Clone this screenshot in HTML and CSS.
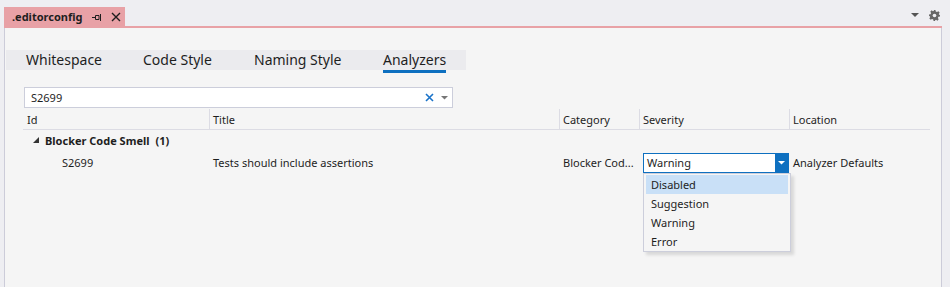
FILE: index.html
```html
<!DOCTYPE html>
<html lang="en">
<head>
    <meta charset="UTF-8">
    <title>.editorconfig</title>
    <link rel="stylesheet" href="styles.css">
</head>
<body>
    <div class="well">
        <div class="tab-strip">
            <div class="doc-tab">
                <span class="doc-name">.editorconfig</span>
                <svg class="pin" width="9" height="7" viewBox="0 0 9 7">
                    <path d="M0 3.5h3M3.5 1.5h3.5v4h-3.5zM8.5 0v7" fill="none" stroke="#1e1e1e" stroke-width="1"/>
                </svg>
                <svg class="close" width="10" height="10" viewBox="0 0 10 10">
                    <path d="M1 1l8 8M9 1l-8 8" stroke="#1e1e1e" stroke-width="1.4"/>
                </svg>
            </div>
            <div class="strip-tools">
                <svg width="8" height="5" viewBox="0 0 8 5"><path d="M0 0h8l-4 4z" fill="#555"/></svg>
                <svg width="11" height="11" viewBox="0 0 12 12">
                    <path d="M5 0h2l.4 1.7 1.3.6 1.5-.9 1.4 1.4-.9 1.5.6 1.3L12 5v2l-1.7.4-.6 1.3.9 1.5-1.4 1.4-1.5-.9-1.3.6L7 12H5l-.4-1.7-1.3-.6-1.5.9-1.4-1.4.9-1.5-.6-1.3L0 7V5l1.7-.4.6-1.3-.9-1.5 1.4-1.4 1.5.9 1.3-.6z" fill="#666"/>
                    <circle cx="6" cy="6" r="2" fill="#eeeef2"/>
                </svg>
            </div>
        </div>
        <div class="panel">
            <div class="page-tabs">
                <span class="page-tab tab-ws">Whitespace</span>
                <span class="page-tab tab-cs">Code Style</span>
                <span class="page-tab tab-ns">Naming Style</span>
                <span class="page-tab tab-an"><span class="active">Analyzers</span></span>
            </div>

            <div class="search">
                <span class="search-text">S2699</span>
                <svg class="search-clear" width="9" height="9" viewBox="0 0 9 9">
                    <path d="M1 1l7 7M8 1l-7 7" stroke="#1a73c9" stroke-width="1.6"/>
                </svg>
                <svg class="search-drop" width="7" height="4" viewBox="0 0 7 4"><path d="M0 0h7l-3.5 3.5z" fill="#777"/></svg>
            </div>

            <div class="grid">
                <div class="cell head first">Id</div>
                <div class="cell head">Title</div>
                <div class="cell head">Category</div>
                <div class="cell head">Severity</div>
                <div class="cell head">Location</div>

                <div class="group">
                    <svg width="7" height="7" viewBox="0 0 7 7"><path d="M6 0v6H0z" fill="#333"/></svg>
                    <span>Blocker Code Smell</span><span class="count">(1)</span>
                </div>

                <div class="cell row id">S2699</div>
                <div class="cell row">Tests should include assertions</div>
                <div class="cell row">Blocker Cod...</div>
                <div class="cell row combo-cell">
                    <div class="combo">
                        <span class="combo-value">Warning</span>
                        <span class="combo-btn">
                            <svg width="7" height="4" viewBox="0 0 7 4"><path d="M0 0h7l-3.5 3.5z" fill="#fff"/></svg>
                        </span>
                    </div>
                    <ul class="combo-list">
                        <li class="selected">Disabled</li>
                        <li>Suggestion</li>
                        <li>Warning</li>
                        <li>Error</li>
                    </ul>
                </div>
                <div class="cell row">Analyzer Defaults</div>
            </div>
        </div>
    </div>
</body>
</html>
```

FILE: styles.css
```css
body {
    margin: 0;
    background-color: #eeeef2;
    font-family: "Noto Sans", "Open Sans", sans-serif;
    font-size: 11px;
    color: #1e1e1e;
    height: 287px;
    overflow: hidden;
}
.well {
    margin-left: 4px;
    width: 938px;
}
.tab-strip {
    display: flex;
    align-items: flex-end;
    justify-content: space-between;
    height: 26px;
    border-bottom: 2px solid #e8a1a6;
}
.doc-tab {
    display: flex;
    align-items: center;
    height: 19px;
    padding: 0 4px 0 8px;
    background-color: #e8a1a6;
    font-weight: bold;
}
.pin {
    margin: 1px 0 0 10px;
}
.close {
    margin-left: 10px;
}
.strip-tools {
    display: flex;
    align-items: center;
    gap: 10px;
    margin-right: 2px;
    padding-bottom: 5px;
}
.panel {
    position: relative;
    box-sizing: border-box;
    background-color: #f5f5f5;
    border-left: 1px solid #ccccd9;
    border-right: 1px solid #ccccd9;
    height: 259px;
    padding: 22px 0 0 1px;
}
.page-tabs {
    display: flex;
    width: 460px;
    height: 20px;
    background-color: #ebebee;
    font-size: 14px;
    white-space: nowrap;
}
.page-tab {
    box-sizing: border-box;
    padding-left: 20px;
    line-height: 20px;
}
.tab-ws {
    width: 117px;
}
.tab-cs {
    width: 111px;
}
.tab-ns {
    width: 129px;
}
.page-tab .active {
    display: inline-block;
    height: 23px;
    box-shadow: inset 0 -3px 0 #0e70c0;
}
.search {
    display: flex;
    align-items: center;
    margin: 17px 0 0 18px;
    width: 421px;
    height: 19px;
    background-color: #fff;
    border: 1px solid #cccedb;
    padding-left: 6px;
}
.search-text {
    flex: 1;
}
.search-clear {
    margin-right: 7px;
}
.search-drop {
    margin-right: 4px;
}
.grid {
    display: grid;
    grid-template-columns: 186px 350px 80px 150px 141px;
    margin-left: 17px;
    margin-top: 1px;
}
.cell {
    padding-left: 3px;
    white-space: nowrap;
}
.head {
    height: 20px;
    line-height: 21px;
    border-left: 1px solid #dcdce4;
    border-bottom: 1px solid #dcdce4;
}
.head.first {
    border-left: none;
    padding-left: 4px;
}
.group {
    grid-column: 1 / -1;
    display: flex;
    align-items: center;
    height: 21px;
    padding-left: 10px;
    font-weight: bold;
}
.group svg {
    margin-right: 5px;
}
.count {
    margin-left: 6px;
}
.row {
    height: 20px;
    line-height: 20px;
    margin-top: 2px;
    padding-left: 4px;
}
.row.id {
    padding-left: 39px;
}
.combo-cell {
    position: relative;
    padding-left: 4px;
}
.combo {
    display: flex;
    height: 18px;
    border: 1px solid #0e70c0;
    background-color: #fff;
}
.combo-value {
    flex: 1;
    line-height: 18px;
    padding-left: 3px;
}
.combo-btn {
    display: flex;
    align-items: center;
    justify-content: center;
    width: 13px;
    background-color: #0e70c0;
}
.combo-list {
    position: absolute;
    left: 4px;
    top: 20px;
    width: 142px;
    margin: 0;
    padding: 1px 2px 0;
    list-style: none;
    background-color: #f5f5f5;
    border: 1px solid #cccedb;
    box-shadow: 3px 3px 3px rgba(0, 0, 0, 0.12);
}
.combo-list li {
    height: 19px;
    line-height: 19px;
    padding-left: 5px;
}
.combo-list li.selected {
    background-color: #c9e0f7;
}
```
